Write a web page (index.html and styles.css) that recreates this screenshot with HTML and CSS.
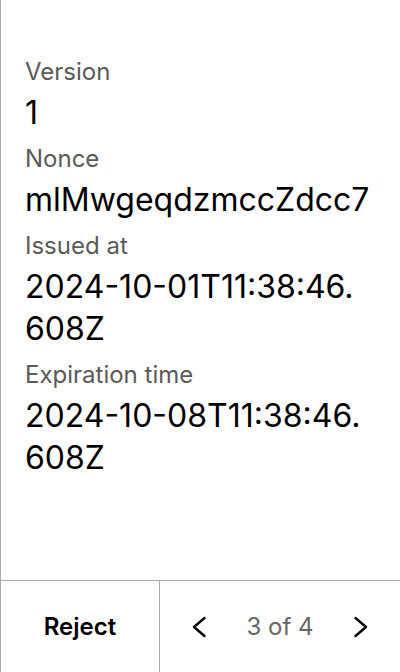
FILE: index.html
```html
<!DOCTYPE html>
<html lang="en">
<head>
<meta charset="utf-8">
<link rel="stylesheet" href="styles.css">
</head>
<body>
<div class="panel">
  <div class="content">
    <div class="field">
      <div class="label">Version</div>
      <div class="value">1</div>
    </div>
    <div class="field">
      <div class="label">Nonce</div>
      <div class="value">mlMwgeqdzmccZdcc7</div>
    </div>
    <div class="field">
      <div class="label">Issued at</div>
      <div class="value">2024-10-01T11:38:46.<wbr>608Z</div>
    </div>
    <div class="field">
      <div class="label">Expiration time</div>
      <div class="value">2024-10-08T11:38:46.<wbr>608Z</div>
    </div>
  </div>
  <div class="footer">
    <button class="reject">Reject</button>
    <div class="pager">
      <button class="nav" aria-label="Previous">
        <svg width="16" height="24" viewBox="0 0 16 24"><path d="M13.5 3 L3 12 L13.5 21" fill="none" stroke="#000" stroke-width="2.4" stroke-linecap="round" stroke-linejoin="round"/></svg>
      </button>
      <span class="count">3 of 4</span>
      <button class="nav" aria-label="Next">
        <svg width="16" height="24" viewBox="0 0 16 24"><path d="M2.5 3 L13 12 L2.5 21" fill="none" stroke="#000" stroke-width="2.4" stroke-linecap="round" stroke-linejoin="round"/></svg>
      </button>
    </div>
  </div>
</div>
</body>
</html>
```
FILE: styles.css
```css
* { box-sizing: border-box; }
html, body { margin: 0; padding: 0; }
body {
  font-family: Inter, "Noto Sans", sans-serif;
  background: #fff;
  color: #000;
}
.panel {
  width: 400px;
  height: 672px;
  border-left: 1px solid #a8a8a8;
  display: flex;
  flex-direction: column;
}
.content {
  flex: 1;
  padding: 56px 16px 0 24px;
  display: flex;
  flex-direction: column;
  gap: 9px;
}
.field { display: flex; flex-direction: column; gap: 4px; }
.label {
  font-size: 24px;
  line-height: 32px;
  color: #5a5a5a;
}
.value {
  font-size: 32px;
  line-height: 42px;
  color: #000;
}
.footer {
  height: 92px;
  border-top: 1px solid #a8a8a8;
  display: flex;
}
.reject {
  width: 159px;
  border: 0;
  border-right: 1px solid #a8a8a8;
  background: none;
  font-family: inherit;
  font-size: 24px;
  font-weight: 600;
  color: #000;
  padding: 0;
}
.pager {
  flex: 1;
  display: flex;
  align-items: center;
  justify-content: space-between;
  padding: 0 31px;
}
.nav {
  border: 0;
  background: none;
  padding: 0;
  display: flex;
}
.count {
  font-size: 24px;
  color: #666;
}
```
